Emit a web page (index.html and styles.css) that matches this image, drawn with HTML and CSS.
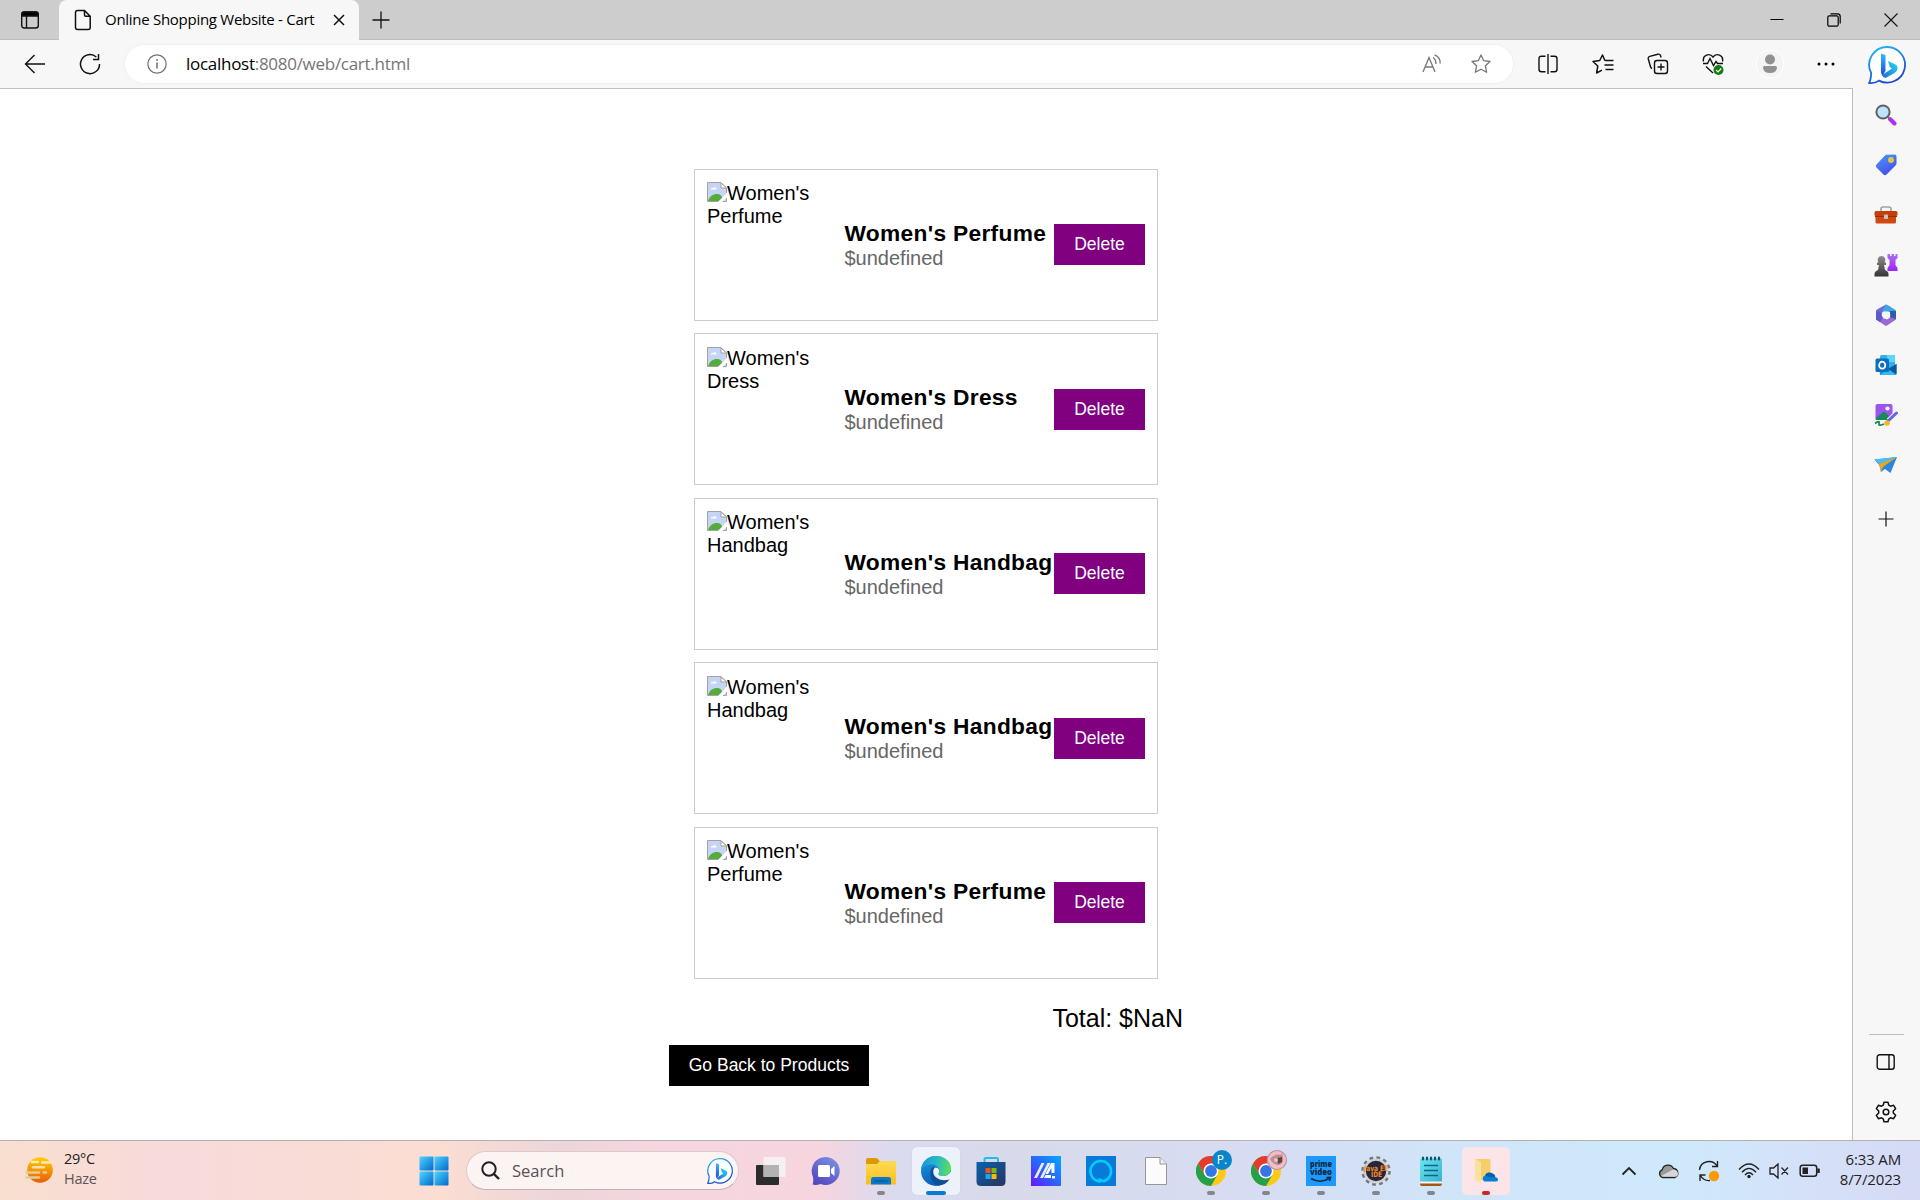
FILE: index.html
```html
<!DOCTYPE html>
<html lang="en">
<head>
<meta charset="utf-8">
<title>Online Shopping Website - Cart</title>
<link rel="stylesheet" href="styles.css">
</head>
<body>
<svg class="defs" aria-hidden="true">
  <defs>
    <linearGradient id="gBing" x1="0" y1="0" x2="0.4" y2="1"><stop offset="0" stop-color="#1fc0f1"/><stop offset="1" stop-color="#1b48d0"/></linearGradient>
    <linearGradient id="gB" x1="0" y1="0" x2="0" y2="1"><stop offset="0" stop-color="#37bdff"/><stop offset="1" stop-color="#1a49dc"/></linearGradient>
    <linearGradient id="gB2" x1="1" y1="0" x2="0" y2="1"><stop offset="0" stop-color="#26dfe8"/><stop offset="1" stop-color="#2264df"/></linearGradient>
    <linearGradient id="gWin" x1="0" y1="0" x2="1" y2="1"><stop offset="0" stop-color="#4fd5ff"/><stop offset="1" stop-color="#0069cc"/></linearGradient>
    <linearGradient id="gTag" x1="0" y1="0" x2="0.5" y2="1"><stop offset="0" stop-color="#4a9cf5"/><stop offset="1" stop-color="#4650ee"/></linearGradient>
    <linearGradient id="gPurp" x1="0" y1="0" x2="0" y2="1"><stop offset="0" stop-color="#ab70f5"/><stop offset="1" stop-color="#9b25f3"/></linearGradient>
    <linearGradient id="gDark" x1="0" y1="0" x2="0" y2="1"><stop offset="0" stop-color="#8d8d8d"/><stop offset="1" stop-color="#353535"/></linearGradient>
    <linearGradient id="gEdge" x1="0" y1="0.3" x2="1" y2="0.4"><stop offset="0" stop-color="#1494df"/><stop offset=".5" stop-color="#27b7c9"/><stop offset="1" stop-color="#5be05a"/></linearGradient>
    <linearGradient id="gEdge2" x1="0" y1="0" x2="0.4" y2="1"><stop offset="0" stop-color="#1b9de2"/><stop offset="1" stop-color="#0b5cb5"/></linearGradient>
    <linearGradient id="gStore" x1="0" y1="0" x2="1" y2="1"><stop offset="0" stop-color="#0864ad"/><stop offset="1" stop-color="#2a315e"/></linearGradient>
    <linearGradient id="gAsus" x1="1" y1="0" x2="0" y2="1"><stop offset="0" stop-color="#00a8ff"/><stop offset=".5" stop-color="#2a67ff"/><stop offset="1" stop-color="#6617ff"/></linearGradient>
    <linearGradient id="gFold" x1="0" y1="0" x2="0" y2="1"><stop offset="0" stop-color="#ffdb55"/><stop offset="1" stop-color="#fbbd20"/></linearGradient>
    <linearGradient id="gSun" x1="0" y1="0" x2="0" y2="1"><stop offset="0" stop-color="#ffd000"/><stop offset="1" stop-color="#ea5b08"/></linearGradient>
    <linearGradient id="gChat" x1="1" y1="0" x2="0.3" y2="1"><stop offset="0" stop-color="#7f97e6"/><stop offset="1" stop-color="#5548bd"/></linearGradient>
    <linearGradient id="gNote" x1="0" y1="0" x2="1" y2="1"><stop offset="0" stop-color="#6ce5f3"/><stop offset="1" stop-color="#35afce"/></linearGradient>
    <symbol id="broken" viewBox="0 0 20 20">
      <path d="M.5.5H14L19.500 6V19.500H.5Z" fill="#c5d5f5" stroke="#a2a2a2"/>
      <path d="M4 7.500c0-2 2-2 2.200-1C7 4.500 9.500 5 9.500 7.500Z" fill="#fff"/>
      <path d="M1 19C2.500 14.500 6 12 10 12S15 14 16 19Z" fill="#57ab3c"/>
      <path d="M11 20L20 10.500V15.500L15.500 20Z" fill="#fff"/>
      <path d="M14 1V6H19.500Z" fill="#fff" stroke="#a2a2a2"/>
    </symbol>
    <symbol id="bing" viewBox="0 0 38 38">
      <path d="M19.500 1A17.800 17.800 0 1 1 11 34.600C8 37 4.500 37.300 1.200 37 2.700 34 3 31 3.200 27A17.800 17.800 0 0 1 19.500 1Z" fill="#fff" stroke="url(#gBing)" stroke-width="1.800"/>
      <path d="M13 7.500L17.500 9V25L14.500 29.500C13.500 28.500 13 27.500 13 26Z" fill="url(#gB)"/>
      <path d="M20 15L28 18.800C31 21 29.500 25.500 26.500 27L18.500 31.500C16.500 32.300 14.500 31 14 29L24 22.500 21.800 21Z" fill="url(#gB2)"/>
    </symbol>
    <symbol id="chrome" viewBox="0 0 30 30">
      <circle cx="15" cy="15" r="15" fill="#fdc914"/>
      <path d="M2 7.500A15 15 0 0 0 15 30L21.500 18.800L8.500 18.800Z" fill="#22a14a"/>
      <path d="M2 7.500A15 15 0 0 1 28 7.500H15L8.500 18.800Z" fill="#e33b2e"/>
      <circle cx="15" cy="15" r="7.500" fill="#fff"/><circle cx="15" cy="15" r="5.900" fill="#3376e6"/>
    </symbol>
  </defs>
</svg>

<header class="tabstrip">
  <div class="tab-actions">
    <svg width="20" height="20" viewBox="0 0 20 20" fill="none" stroke="#111" stroke-width="1.400"><rect x="1.700" y="2" width="16.600" height="16" rx="2.500"/><path d="M2 6V4Q2 2 4 2H16Q18 2 18 4V6Z" fill="#000"/><path d="M6.500 6V18"/></svg>
  </div>
  <div class="tab">
    <svg width="18" height="22" viewBox="0 0 18 22" fill="none" stroke="#111" stroke-width="1.500"><path d="M3.500 1.500H10.500L16.200 7.200V18.500Q16.200 20.500 14.200 20.500H3.500Q1.500 20.500 1.500 18.500V3.500Q1.500 1.500 3.500 1.500ZM10.500 1.500V6Q10.500 7.200 11.700 7.200H16.200"/></svg>
    <span class="tab-title">Online Shopping Website - Cart</span>
    <svg class="tab-close" width="12" height="12" viewBox="0 0 12 12" stroke="#111" stroke-width="1.500"><path d="M1 1L11 11M11 1L1 11"/></svg>
  </div>
  <svg class="new-tab" width="18" height="18" viewBox="0 0 18 18" stroke="#111" stroke-width="1.300"><path d="M9 .5V17.500M.5 9H17.500"/></svg>
  <div class="window-buttons">
    <span><svg width="14" height="14" viewBox="0 0 14 14" stroke="#000"><path d="M.5 6.500H13.500"/></svg></span>
    <span><svg width="14" height="14" viewBox="0 0 14 14" fill="none" stroke="#000" stroke-width="1.200"><rect x=".8" y="2.800" width="10.400" height="10.400" rx="1.500"/><path d="M3.500 .8H10.500Q13.200.8 13.200 3.500V10.500"/></svg></span>
    <span><svg width="14" height="14" viewBox="0 0 14 14" stroke="#111" stroke-width="1.100"><path d="M.5.5L13.500 13.500M13.500.5L.5 13.500"/></svg></span>
  </div>
</header>

<div class="browser">
  <div class="main">
    <nav class="toolbar">
      <span class="tool"><svg width="22" height="20" viewBox="0 0 22 20" fill="none" stroke="#111" stroke-width="1.400"><path d="M21 10H1.500M10.500 1L1.500 10L10.500 19"/></svg></span>
      <span class="tool"><svg width="22" height="22" viewBox="0 0 22 22" fill="none" stroke="#111" stroke-width="1.500"><path d="M20.500 11A9.500 9.500 0 1 1 17.300 4M19.500 1V6.500H14"/></svg></span>
      <div class="address">
        <svg width="20" height="20" viewBox="0 0 20 20" fill="none" stroke="#707070" stroke-width="1.200"><circle cx="10" cy="10" r="9.200"/><path d="M10 8.500V14.500M10 5V6.800" stroke-width="1.500"/></svg>
        <span class="url">localhost<span class="url-rest">:8080/web/cart.html</span></span>
        <svg class="read" width="20" height="20" viewBox="0 0 20 20" fill="none" stroke="#767676" stroke-width="1.300"><path d="M1 18L7 3.500L13 18M3.300 13H10.800M11 3.500Q14 5.500 14 10M12.500 .8Q18.500 3 18.200 9.500"/></svg>
        <svg class="star" width="20" height="20" viewBox="0 0 20 20" fill="none" stroke="#767676" stroke-width="1.300" stroke-linejoin="round"><path d="M10 1L12.700 6.700L19 7.500L14.400 11.800L15.600 18.300L10 15.200L4.400 18.300L5.600 11.800L1 7.500L7.300 6.700Z"/></svg>
      </div>
      <div class="tools-right">
        <span class="tool"><svg width="20" height="20" viewBox="0 0 20 20" fill="none" stroke="#111" stroke-width="1.400"><path d="M10 0V20M7.500 2.200H3.500Q1 2.200 1 4.700V15.300Q1 17.800 3.500 17.800H7.500M12.500 2.200H16.500Q19 2.200 19 4.700V15.300Q19 17.800 16.500 17.800H12.500"/></svg></span>
        <span class="tool"><svg width="22" height="20" viewBox="0 0 22 20" fill="none" stroke="#111" stroke-width="1.500" stroke-linejoin="round"><path d="M14 6.500L12.800 6.300L10.500 1L7.700 6.500L1 7.500L5.800 12L4.600 19L10 16.200M13 6.500H21.500M12.500 11H21.500M13.500 15.500H21.500"/></svg></span>
        <span class="tool"><svg width="22" height="22" viewBox="0 0 22 22" fill="none" stroke="#111" stroke-width="1.400"><rect x="7.500" y="7.500" width="13" height="13" rx="2.500"/><path d="M14 10.500V17.500M10.500 14H17.500M5 15.500Q3.800 15 3.400 13.500L1.300 6Q.8 4 2.800 3.300L10.800 1.200Q13 .8 13.700 3L14 4.500"/></svg></span>
        <span class="tool"><svg width="22" height="22" viewBox="0 0 22 22" fill="none" stroke="#111" stroke-width="1.400"><path d="M1.500 8.500C.2 2 7.500-.5 11 4C14.500-.5 21.800 2 20.500 8.500M1 10.500H5.500L8 5.500L11.500 12.500L14 8.500L15.500 10.500H21M4 13.500L11 20"/><circle cx="16.500" cy="17" r="5" fill="#137a14" stroke="none"/><path d="M14 17L16 19L19.300 15.500" stroke="#fff" stroke-width="1.200"/></svg></span>
        <span class="tool tool-profile"><svg width="30" height="30" viewBox="0 0 30 30"><circle cx="15" cy="15" r="14" fill="#f4f4f4" stroke="#fff"/><circle cx="15" cy="10.500" r="5" fill="#919191"/><path d="M8 18.500Q8 17 9.500 17H20.500Q22 17 22 18.500Q21.500 24 15 24T8 18.500Z" fill="#919191"/></svg></span>
        <span class="tool tool-more"><svg width="18" height="4" viewBox="0 0 18 4"><circle cx="2" cy="2" r="1.500"/><circle cx="9" cy="2" r="1.500"/><circle cx="16" cy="2" r="1.500"/></svg></span>
      </div>
    </nav>
    <main class="page">
      <section class="cart">
        <ul class="items">
          <li class="item"><div class="thumb"><svg class="broken"><use href="#broken"/></svg>Women's Perfume</div><div class="info"><h3>Women's Perfume</h3><p>$undefined</p></div><button class="btn delete">Delete</button></li>
          <li class="item"><div class="thumb"><svg class="broken"><use href="#broken"/></svg>Women's Dress</div><div class="info"><h3>Women's Dress</h3><p>$undefined</p></div><button class="btn delete">Delete</button></li>
          <li class="item"><div class="thumb"><svg class="broken"><use href="#broken"/></svg>Women's Handbag</div><div class="info"><h3>Women's Handbag</h3><p>$undefined</p></div><button class="btn delete">Delete</button></li>
          <li class="item"><div class="thumb"><svg class="broken"><use href="#broken"/></svg>Women's Handbag</div><div class="info"><h3>Women's Handbag</h3><p>$undefined</p></div><button class="btn delete">Delete</button></li>
          <li class="item"><div class="thumb"><svg class="broken"><use href="#broken"/></svg>Women's Perfume</div><div class="info"><h3>Women's Perfume</h3><p>$undefined</p></div><button class="btn delete">Delete</button></li>
        </ul>
        <p class="total">Total: $NaN</p>
        <button class="btn back">Go Back to Products</button>
      </section>
    </main>
  </div>

  <aside class="sidebar">
    <span class="side side-bing"><svg width="38" height="38"><use href="#bing"/></svg></span>
    <span class="side"><svg width="22" height="22" viewBox="0 0 22 22"><path d="M15 15L19.500 19.500" stroke="#b22df3" stroke-width="4" stroke-linecap="round"/><path d="M12.500 12.500L15 15" stroke="#777" stroke-width="2"/><circle cx="8" cy="8" r="6.600" fill="#bfe3fb" stroke="#616161" stroke-width="2"/></svg></span>
    <span class="side"><svg width="22" height="22" viewBox="0 0 22 22"><path d="M11.500.8L19.500.5Q21.500.5 21.500 2.500V9.500Q21.500 10.500 20.500 11.500L11.500 20.500Q10 22 8.500 20.500L1.500 13.500Q0 12 1.500 10.500L9.500 2Q10.500.8 11.500.8Z" fill="url(#gTag)"/><circle cx="16" cy="6" r="2.200" fill="#c9c48a" stroke="#f4c72c" stroke-width="1.500"/></svg></span>
    <span class="side"><svg width="24" height="20" viewBox="0 0 24 20"><path d="M7 7V4Q7 2 9 2H15Q17 2 17 4V7" fill="none" stroke="#a3a3a3" stroke-width="1.700"/><rect x="1.500" y="8" width="20.500" height="10.500" rx="1.500" fill="#d2490f"/><rect x=".5" y="6" width="23" height="5" rx="1.500" fill="#c63e08"/><path d="M1 11.500H23" stroke="#952f07"/><rect x="10" y="9.500" width="4" height="4.500" rx="1" fill="#c5c5c5"/></svg></span>
    <span class="side"><svg width="24" height="24" viewBox="0 0 24 24"><path d="M13.500 1H16V3H17.500V1H20V3H21.500V1H23.500V5L21.500 7V12L23.500 15V18H13.500V15L15.500 12V7L13.500 5Z" fill="url(#gPurp)"/><path d="M7.500 3A4 4 0 0 1 10.500 9.500H12V12H10L11 17Q14.500 18.500 14.500 21V23.500H.5V21Q.5 18.500 4 17L5 12H3V9.500H4.500A4 4 0 0 1 7.500 3Z" fill="url(#gDark)"/></svg></span>
    <span class="side"><svg width="22" height="22" viewBox="0 0 22 22"><path d="M11 .5L2 5.500Q1 6 1 7V15L6.500 17.500V8.500L16 3Z" fill="#7268d8"/><path d="M11 .5L20 5.500Q21 6 21 7.500V14L15 11V8L6.500 8.500L10 2Z" fill="#3ea8e5"/><path d="M21 9V15.500L12 21.500Q11 22 10 21.500L1 15.500L7 13L12 15.500L21 9Z" fill="#9a69d5"/><path d="M1 7V15.500L5 18 8 13 6.500 8.500Z" fill="#5e5ac6"/><path d="M15 7V13L21 15V7Z" fill="#315aa8"/><path d="M8.500 7.500H13.500L15.500 11 13.500 14.500H8.500L6.500 11Z" fill="#f7f7f7"/></svg></span>
    <span class="side"><svg width="22" height="22" viewBox="0 0 22 22"><rect x="5" y="1" width="15" height="18" rx="1.500" fill="#32aee8"/><path d="M12 1H20V8H12Z" fill="#5ed5fc"/><path d="M4 10L13 15L21.500 10V20Q21.500 21 20.500 21H5Z" fill="#158dd5"/><path d="M13 15L21.500 10V20Z" fill="#0b559b"/><path d="M5 21L13 15L21 21Z" fill="#35baf2"/><rect x=".5" y="4.500" width="13.500" height="13.500" rx="1.500" fill="#086ebd"/><ellipse cx="7.200" cy="11.200" rx="3.100" ry="3.500" fill="none" stroke="#fff" stroke-width="1.800"/></svg></span>
    <span class="side"><svg width="24" height="24" viewBox="0 0 24 24"><rect x="1.500" y="1" width="17" height="17" rx="2" fill="#9a56ef"/><circle cx="13.500" cy="5.500" r="2.100" fill="#fff"/><path d="M2 15L8 10Q10 8 12 10L17 15V18H2Z" fill="#188a5c"/><path d="M0 17H13L10 23H0Z" fill="#f7f7f7"/><path d="M1 20.500C4 18 6 18 5 20.500S8 22 10 21" fill="none" stroke="#168a60" stroke-width="1.700"/><path d="M14.500 17.500L22.500 10" stroke="#f7f7f7" stroke-width="5"/><path d="M14.500 17.500L22.500 10" stroke="#6560ec" stroke-width="3" stroke-linecap="round"/><path d="M10 21C11 20 9.500 18 12.500 17.500S17 19.500 15.500 21.500S11.500 23 10 21Z" fill="#f6b822"/></svg></span>
    <span class="side"><svg width="24" height="18" viewBox="0 0 24 18"><path d="M.5 3.500L23 1L16.500 17L11 13L7 16L5.500 9.500Z" fill="#2786df"/><path d="M.5 3.500L23 1L6 9Z" fill="#47bdf4"/><path d="M5 8L23 1L9 11L7 16Z" fill="#eda222"/></svg></span>
    <span class="side side-plus"><svg width="16" height="16" viewBox="0 0 16 16" stroke="#111" stroke-width="1.200"><path d="M8 .5V15.500M.5 8H15.500"/></svg></span>
    <div class="side-bottom">
      <span class="side"><svg width="20" height="18" viewBox="0 0 20 18" fill="none" stroke="#111" stroke-width="1.400"><rect x="1.200" y="1.700" width="17" height="14.600" rx="2.500"/><path d="M13 2V16"/></svg></span>
      <span class="side"><svg width="22" height="22" viewBox="0 0 22 22" fill="none" stroke="#111" stroke-width="1.500" stroke-linejoin="round"><path d="M9 1.200H13L13.800 4.200L15.500 5.200L18.600 4.300L20.600 7.700L18.300 10V12L20.600 14.300L18.600 17.700L15.500 16.800L13.800 17.800L13 20.800H9L8.200 17.800L6.500 16.800L3.400 17.700L1.400 14.300L3.700 12V10L1.400 7.700L3.400 4.300L6.500 5.200L8.200 4.200Z"/><circle cx="11" cy="11" r="2.800"/></svg></span>
    </div>
  </aside>
</div>

<footer class="taskbar">
  <div class="weather">
    <svg width="30" height="28" viewBox="0 0 30 28"><circle cx="15" cy="13" r="12.800" fill="url(#gSun)"/><g stroke-linecap="round" stroke-width="2.400"><path d="M7 5H13M17 5.500H28" stroke="#ffe9b5"/><path d="M8 10.200H19" stroke="#fae0a8"/><path d="M1.500 15.500H14M18.500 15.500H21" stroke="#e3cc97"/><path d="M1.500 20.500H14" stroke="#e3cc97"/></g></svg>
    <div class="weather-text"><span class="temp">29°C</span><span class="haze">Haze</span></div>
  </div>
  <span class="app"><svg width="30" height="30" viewBox="0 0 30 30" fill="url(#gWin)"><rect x=".5" y=".5" width="14" height="14" rx="1"/><rect x="15.500" y=".5" width="14" height="14" rx="1"/><rect x=".5" y="15.500" width="14" height="14" rx="1"/><rect x="15.500" y="15.500" width="14" height="14" rx="1"/></svg></span>
  <div class="search">
    <svg width="19" height="19" viewBox="0 0 19 19" fill="none" stroke="#222" stroke-width="2"><circle cx="8" cy="8" r="6.700"/><path d="M12.800 12.800L18 18" stroke-width="2.400"/></svg>
    <span class="search-text">Search</span>
    <svg class="search-bing" width="26" height="26"><use href="#bing"/></svg>
  </div>
  <div class="apps">
    <span class="app"><svg width="30" height="30" viewBox="0 0 30 30"><rect x="0" y="9" width="23" height="20" rx="1" fill="#2c2c2c"/><rect x="7.500" y="1" width="22" height="20" rx="1" fill="#f6f6f6" fill-opacity=".8"/><path d="M7.500 9H23V21H7.500Z" fill="#b3b3b3"/></svg></span>
    <span class="app"><svg width="30" height="30" viewBox="0 0 30 30"><path d="M15 1A14 14 0 1 1 9.500 28Q5 29.500 1.500 28.500Q2.800 25.500 2 21A14 14 0 0 1 15 1Z" fill="url(#gChat)"/><rect x="7" y="9" width="12" height="12" rx="1.500" fill="#fff"/><path d="M20 13L23.500 10V20L20 17Z" fill="#fff"/></svg></span>
    <span class="app run"><svg width="30" height="30" viewBox="0 0 30 30"><path d="M0 4Q0 2 2 2H10Q11.500 2 12.500 3.500L13.500 5H28Q30 5 30 7V12H0Z" fill="#dc9a05"/><path d="M0 8H11L14 5H28.500Q30 5 30 6.500V28.500H0Z" fill="url(#gFold)"/><path d="M5 28.500V23.500Q5 21 7.500 21H22.500Q25 21 25 23.500V28.500Z" fill="#0879ca"/><path d="M8.500 25H21.500" stroke="#04508e" stroke-width="1.200"/></svg></span>
    <span class="app run active"><svg width="30" height="30" viewBox="0 0 30 30"><circle cx="15" cy="15" r="15" fill="url(#gEdge2)"/><path d="M0 14C1 5 7 0 15 0C24 0 30 6 30 12C30 17 26 20 22 20C18 20 17 18.500 17.500 17.500C20 14 16.500 8.500 11 8.500C5 8.500 1 11.500 0 14Z" fill="url(#gEdge)"/><path d="M12 11C7 15 9 27 17.500 29.700C23 29 26.500 26.500 28.500 23C23 26 15.500 24 13 19C11.500 16 12 13.500 13.500 12Z" fill="#0f4f96"/><path d="M13.500 12C17 11 19.500 14 17.500 17.500C17 18.500 18 20 22 20C26 20 28.500 18 30 15V21L28.500 23C23 26 13 23 12.300 16.500Q12 13.500 13.500 12Z" fill="#edf1fa"/></svg></span>
    <span class="app"><svg width="30" height="30" viewBox="0 0 30 30"><path d="M8.500 7V3.500Q8.500 2 10 2H20.500Q22 2 22 3.500V7" fill="none" stroke="#22bdea" stroke-width="2"/><path d="M.5 6H29.500V25.500Q29.500 30 25 30H5Q.5 30 .5 25.500Z" fill="url(#gStore)"/><path d="M9.500 12H14.500V17H9.500Z" fill="#f25022"/><path d="M15.500 12H20.500V17H15.500Z" fill="#7fba00"/><path d="M9.500 18H14.500V23H9.500Z" fill="#18a7f2"/><path d="M15.500 18H20.500V23H15.500Z" fill="#ffb900"/></svg></span>
    <span class="app"><svg width="30" height="30" viewBox="0 0 30 30"><path d="M0 0H30V30H0Z" fill="url(#gAsus)"/><path d="M3 22L10.500 7H13.500L6 22ZM9 22L16.500 7H19.500L12 22Z" fill="#e5edff"/><path d="M20 7H23.500V17H20.500V12L17 18H14.500ZM14.500 19H20V22H13ZM21 20H24V22.500H21Z" fill="#fff"/></svg></span>
    <span class="app"><svg width="30" height="30" viewBox="0 0 30 30"><path d="M0 0H30V30H0Z" fill="#087bd9"/><path d="M13.500 25.500A10.300 10.300 0 1 1 17.500 25.200Q14 24.500 13.500 22.500Z" fill="none" stroke="#04cdfb" stroke-width="2.600"/></svg></span>
    <span class="app"><svg width="24" height="30" viewBox="0 0 24 30"><path d="M1.500 1.500H16L22.500 8V28.500H1.500Z" fill="#fbfbfb" stroke="#979797"/><path d="M16 1.500V8H22.500" fill="#eee" stroke="#979797"/></svg></span>
    <span class="app run"><svg width="30" height="30"><use href="#chrome"/></svg><span class="badge badge-p">P.</span></span>
    <span class="app run"><svg width="30" height="30"><use href="#chrome"/></svg><span class="badge badge-cat"><svg width="20" height="20" viewBox="0 0 20 20"><path d="M3 9Q8 3 14 5L15 2L16 8Q17 13 12 15Q6 15 3 9Z" fill="#bb8f91"/><path d="M10 8L15 7L15 12L11 14Z" fill="#68413e"/><circle cx="9" cy="10" r="2" fill="#e2c7c5"/></svg></span></span>
    <span class="app run"><svg width="30" height="30" viewBox="0 0 30 30"><path d="M0 0H30V30H0Z" fill="#1d98fc"/><g class="prime"><text x="15" y="10.500" textLength="22" lengthAdjust="spacingAndGlyphs">prime</text><text x="15" y="19" textLength="22" lengthAdjust="spacingAndGlyphs">video</text></g><path d="M5 22.500Q14 28 23 22.500M20.500 21.500L24.500 21.300L23.500 25" fill="none" stroke="#102c40" stroke-width="1.600"/></svg></span>
    <span class="app run"><svg width="30" height="30" viewBox="0 0 30 30"><circle cx="15" cy="15" r="13" fill="none" stroke="#777" stroke-width="3.500" stroke-dasharray="3.600 3.207"/><circle cx="15" cy="15" r="11.300" fill="#28243a" stroke="#d2d2d2" stroke-width="2.200"/><g class="java"><text x="15" y="14.500" textLength="24" lengthAdjust="spacingAndGlyphs">Java EE</text><text x="15.500" y="21" textLength="11" lengthAdjust="spacingAndGlyphs">IDE</text></g></svg></span>
    <span class="app run"><svg width="24" height="32" viewBox="0 0 24 32"><rect x="1" y="3.500" width="22" height="25" rx="1" fill="url(#gNote)"/><path d="M1 28H23V29Q23 31 21 31H3Q1 31 1 29Z" fill="#a45517"/><path d="M1 26.500H23V28.500H1Z" fill="#f6f6f6"/><path d="M5 10.500H19M5 15.500H19M5 20.500H19" stroke="#086887" stroke-width="1.600"/><path d="M4 2.500V4.500M8 2.500V4.500M12 2.500V4.500M16 2.500V4.500M20 2.500V4.500" stroke="#12576e" stroke-width="2.200" stroke-linecap="round"/></svg></span>
    <span class="app run alert"><svg width="24" height="28" viewBox="0 0 24 28"><path d="M1 2H15Q16.500 2 16.500 3.500V23H1Z" fill="#f4ce69"/><path d="M1 2L7 5V26L1 23Z" fill="#fae29c"/><path d="M10.500 24.500A3.300 3.300 0 0 1 11 18.500Q13 14 17.500 16T21 20Q24.500 20.500 24 23Q23.500 24.500 22 24.500Z" fill="#087bd5"/><path d="M11 18.500Q13 14 17.500 16T21 20L15 20Z" fill="#075fa9"/></svg></span>
  </div>
  <div class="tray">
    <svg width="16" height="10" viewBox="0 0 16 10" fill="none" stroke="#222" stroke-width="1.800"><path d="M1.500 8.500L8 2L14.500 8.500"/></svg>
    <svg class="cloud" width="22" height="16" viewBox="0 0 22 16"><path d="M5 14.500A4 4 0 0 1 4.200 6.800A6 6 0 0 1 15.500 5.500A4.700 4.700 0 0 1 17 14.500Z" fill="#999" stroke="#222" stroke-width="1.300"/><path d="M3 13L15 6.500Q20 7 20 10.500T17 13.800H5Z" fill="#d6d6d6"/></svg>
    <svg class="sync" width="22" height="22" viewBox="0 0 22 22" fill="none" stroke="#222" stroke-width="1.400"><path d="M1.500 10A9.500 9.500 0 0 1 19 6M19.500 1V6.500H14M12 20.500A9.500 9.500 0 0 1 2.500 15.500M2 21V15H7.500"/><circle cx="16" cy="16" r="5.200" fill="#fb9a09" stroke="none"/></svg>
    <svg class="wifi" width="22" height="16" viewBox="0 0 22 16" fill="none" stroke="#222" stroke-width="1.400"><path d="M1 6.500Q11-4.500 21 6.500M4 9.200Q11 1.500 18 9.200M7 12Q11 7.500 15 12"/><circle cx="11" cy="13.500" r="1.700" fill="#222" stroke="none"/></svg>
    <svg class="speaker" width="20" height="16" viewBox="0 0 20 16" fill="none" stroke="#222" stroke-width="1.300"><path d="M1 5H4.500L9 1V15L4.500 11H1ZM12.500 4.500L19 11.500M19 4.500L12.500 11.500"/></svg>
    <svg class="battery" width="22" height="14" viewBox="0 0 22 14" fill="none" stroke="#222" stroke-width="1.500"><rect x="1.200" y="1.200" width="16.500" height="11" rx="2.500"/><path d="M3.500 3.500H9V10H3.500Z" fill="#222" stroke="none"/><path d="M19.500 4.500V9" stroke-width="2.500"/></svg>
    <div class="clock"><span class="time">6:33 AM</span><span class="date">8/7/2023</span></div>
  </div>
</footer>
</body>
</html>
```
FILE: styles.css
```css
* { box-sizing: border-box; }
html, body { margin: 0; height: 100%; }
body {
  display: flex;
  flex-direction: column;
  overflow: hidden;
  background: #fff;
  color: #000;
  font-family: "Open Sans", "Noto Sans", sans-serif;
}
svg { display: block; flex: none; }
.defs { position: absolute; width: 0; height: 0; }

/* Tab strip */
.tabstrip {
  display: flex;
  flex: none;
  height: 40px;
  background: #cdcdcd;
  box-shadow: inset 0 -1px #bdbdbd;
}
.tab-actions { width: 59px; display: flex; align-items: center; padding-left: 20px; }
.tab {
  width: 300px;
  display: flex;
  align-items: center;
  padding-left: 15px;
  background: #f7f7f7;
  border-radius: 8px 8px 0 0;
  font-size: 15px;
}
.tab-title { width: 241px; padding: 0 0 2px 13px; letter-spacing: -0.280px; white-space: nowrap; }
.new-tab { margin: 11px 0 0 13px; }
.window-buttons { display: flex; margin-left: auto; padding-right: 1px; }
.window-buttons span { width: 57px; display: flex; align-items: center; justify-content: center; }

/* Browser frame */
.browser { flex: 1; display: flex; min-height: 0; background: #f7f7f7; }
.main { flex: 1; min-width: 0; display: flex; flex-direction: column; }
.toolbar { height: 48px; flex: none; display: flex; align-items: center; padding-left: 7px; }
.tool { width: 55px; flex: none; display: flex; align-items: center; justify-content: center; }
.address {
  width: 1388px;
  flex: none;
  height: 38px;
  margin-left: 8px;
  padding: 0 22px;
  display: flex;
  align-items: center;
  background: #fff;
  border-radius: 19px;
  box-shadow: 0 0 3px #e9e9e9;
}
.url { margin-left: 19px; padding-bottom: 2px; font-size: 17px; letter-spacing: -0.280px; }
.url-rest { color: #757575; }
.read { margin-left: auto; }
.star { margin-left: 29px; }
.tools-right { display: flex; margin-left: 7px; }
.tool-profile { width: 59px; }
.tool-more { width: 52px; padding-left: 2px; }
.page {
  flex: 1;
  background: #fff;
  border-top: 1px solid #bdbdbd;
  border-right: 1px solid #bdbdbd;
  font: 20px "Liberation Sans", Arial, sans-serif;
}

/* Cart */
.cart { width: 514px; margin: 79.500px auto 0; display: flex; flex-direction: column; }
.items { list-style: none; margin: 0; padding: 0 25px; display: flex; flex-direction: column; gap: 12.500px; }
.item { height: 152px; display: flex; align-items: center; padding: 0 12px; border: 1px solid #ccc; }
.thumb { width: 125px; height: 125px; line-height: 23px; }
.broken { display: inline-block; width: 20px; height: 20px; vertical-align: -2px; }
.info { margin-left: 12.500px; white-space: nowrap; }
.info h3 { margin: 0; font-size: 22.750px; line-height: 27px; letter-spacing: 0.300px; }
.info p { margin: 0; line-height: 23px; color: #666; }
.btn {
  height: 41px;
  padding: 0;
  border: 0;
  color: #fff;
  font: 17.500px "Liberation Sans", Arial, sans-serif;
}
.delete { width: 91px; flex: none; margin-left: auto; background: purple; }
.total { margin: 25.500px 0 12.500px; line-height: 28px; font-size: 25px; text-align: right; }
.back { width: 200px; background: #000; }

/* Sidebar */
.sidebar { width: 67px; flex: none; display: flex; flex-direction: column; background: #f7f7f7; }
.side { height: 50px; flex: none; display: flex; align-items: center; justify-content: center; padding-right: 1px; }
.side-bing { padding: 0 0 1px; }
.side-plus { height: 58px; }
.side-bottom { width: 35px; margin: auto auto 3px; border-top: 1px solid #bdbdbd; padding-top: 2px; }

/* Taskbar */
.taskbar {
  height: 60px;
  flex: none;
  display: flex;
  align-items: center;
  border-top: 1px solid #b6b0b5;
  background: linear-gradient(90deg, #f9dfcf 0, #f8dadb 170px, #f9dcd7 290px, #fbddd2 440px, #ebd6da 560px, #f6d6de 660px, #f6d5df 820px, #dadbef 890px, #d8daea 1000px, #d7dcf2 1240px, #d1e4f8 1430px, #cfe9fc 1680px, #d5e0f8 1820px, #d5daf5 1920px);
}
.weather { width: 406px; display: flex; align-items: center; padding-left: 25px; }
.weather-text, .clock { display: flex; flex-direction: column; font-size: 14.500px; line-height: 20px; color: #222; }
.weather-text { margin-left: 9px; margin-top: -3px; letter-spacing: -0.300px; }
.haze { color: #5d5355; }
.app { position: relative; width: 55px; height: 48px; display: flex; align-items: center; justify-content: center; }
.search {
  width: 273px;
  height: 39px;
  margin-left: 5px;
  padding: 0 5px 0 14px;
  display: flex;
  align-items: center;
  border: 1px solid #dfc8cc;
  border-bottom-color: #c4afb3;
  border-radius: 20px;
  background: #fcf3f3;
}
.search-text { margin-left: 12px; font-size: 16.500px; color: #575253; }
.search-bing { margin-left: auto; }
.apps { display: flex; margin-left: 4px; }
.run::after {
  content: "";
  position: absolute;
  bottom: 0;
  width: 8px;
  height: 4px;
  border-radius: 2px;
  background: #85858e;
}
.active::after { width: 20px; background: #087bd5; }
.alert::after { background: #ca2a20; }
.active, .alert { width: 48px; margin: 0 3.500px; border-radius: 5px; background: #edf1fa; box-shadow: 0 0 1px #bfc5d6; }
.alert { background: #fbe5e9; box-shadow: none; }
.badge {
  position: absolute;
  left: 29px;
  top: 3px;
  width: 20px;
  height: 20px;
  border-radius: 50%;
  background: #0986cb;
  color: #fff;
  font-size: 12px;
  line-height: 19px;
  text-align: center;
}
.badge-cat { background: #f2bdca; box-shadow: inset 0 0 0 1px #b8919b; }
.prime { font: 800 8.500px "Open Sans", sans-serif; fill: #102c40; text-anchor: middle; }
.java { font: 800 7.500px "DejaVu Sans", sans-serif; fill: #f18c24; text-anchor: middle; }
.tray { display: flex; align-items: center; margin-left: auto; padding-right: 19px; }
.cloud { margin-left: 21px; }
.sync { margin-left: 18px; }
.wifi { margin-left: 18px; }
.speaker { margin-left: 9px; }
.battery { margin-left: 10px; }
.clock { width: 80px; margin-top: -4px; text-align: right; font-size: 15px; letter-spacing: -0.150px; }
```
